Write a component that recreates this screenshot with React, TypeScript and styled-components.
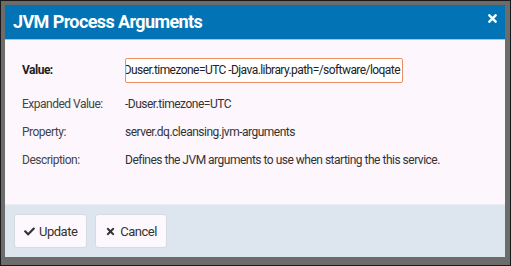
import React from "react";
import styled, { createGlobalStyle } from "styled-components";
import { FaCheck, FaTimes } from "react-icons/fa";

const GlobalStyle = createGlobalStyle`
    body {
        margin: 0;
        font-family: Roboto, "Liberation Sans", Arial, sans-serif;
    }
`;

const Frame = styled.div`
    width: 511px;
    height: 266px;
    box-sizing: border-box;
    border: 1px solid #1a1a1a;
    background: #6c6c6c;
    padding: 4px 5px 8px 4px;
    display: flex;
`;

const Dialog = styled.div`
    flex: 1;
    display: flex;
    flex-direction: column;
    background: #fdf6fd;
`;

const Header = styled.div`
    height: 32px;
    background: #0274b6;
    border-bottom: 1px solid #9ec6df;
    display: flex;
    align-items: center;
    justify-content: space-between;
    padding: 0 6px 2px 8px;
    color: #ffffff;
    h1 {
        margin: 0;
        font-size: 18px;
        font-weight: 700;
        letter-spacing: -0.6px;
    }
`;

const Close = styled.span`
    font-size: 13px;
    display: flex;
    margin-top: -6px;
`;

const Body = styled.div`
    flex: 1;
    padding: 10px 17px 0 17px;
    display: flex;
    flex-direction: column;
`;

const Row = styled.div<{ $h: number }>`
    display: grid;
    grid-template-columns: 103px 1fr;
    align-items: center;
    height: ${(p) => p.$h}px;
    font-size: 12px;
    letter-spacing: -0.5px;
    color: #333333;
`;

const Label = styled.div<{ $bold?: boolean }>`
    font-weight: ${(p) => (p.$bold ? 700 : 400)};
    color: ${(p) => (p.$bold ? "#222" : "#444")};
`;

const Input = styled.div`
    width: 278px;
    height: 25px;
    box-sizing: border-box;
    border: 1px solid #ef8d62;
    border-radius: 2px;
    background: #ffffff;
    display: flex;
    align-items: center;
    justify-content: flex-end;
    overflow: hidden;
    white-space: nowrap;
    padding-right: 2px;
    letter-spacing: -0.56px;
    color: #222;
`;

const Footer = styled.div`
    height: 52px;
    background: #dde5ee;
    border-top: 1px solid #e9eef3;
    display: flex;
    align-items: center;
    gap: 8px;
    padding: 0 9px;
`;

const Button = styled.button`
    height: 34px;
    padding: 0 9px;
    border: 1px solid #d6dbe2;
    border-radius: 3px;
    background: #fdf8fd;
    color: #333;
    font-family: inherit;
    font-size: 13px;
    letter-spacing: -0.5px;
    display: flex;
    align-items: center;
    gap: 4px;
    svg {
        font-size: 11px;
    }
`;

export default function App() {
    return (
        <>
            <GlobalStyle />
            <Frame>
                <Dialog>
                    <Header>
                        <h1>JVM Process Arguments</h1>
                        <Close><FaTimes /></Close>
                    </Header>
                    <Body>
                        <Row $h={40}>
                            <Label $bold>Value:</Label>
                            <Input>-Duser.timezone=UTC -Djava.library.path=/software/loqate</Input>
                        </Row>
                        <Row $h={28}>
                            <Label>Expanded Value:</Label>
                            <div>-Duser.timezone=UTC</div>
                        </Row>
                        <Row $h={28}>
                            <Label>Property:</Label>
                            <div>server.dq.cleansing.jvm-arguments</div>
                        </Row>
                        <Row $h={28}>
                            <Label>Description:</Label>
                            <div>Defines the JVM arguments to use when starting the this service.</div>
                        </Row>
                    </Body>
                    <Footer>
                        <Button><FaCheck /> Update</Button>
                        <Button><FaTimes /> Cancel</Button>
                    </Footer>
                </Dialog>
            </Frame>
        </>
    );
}
